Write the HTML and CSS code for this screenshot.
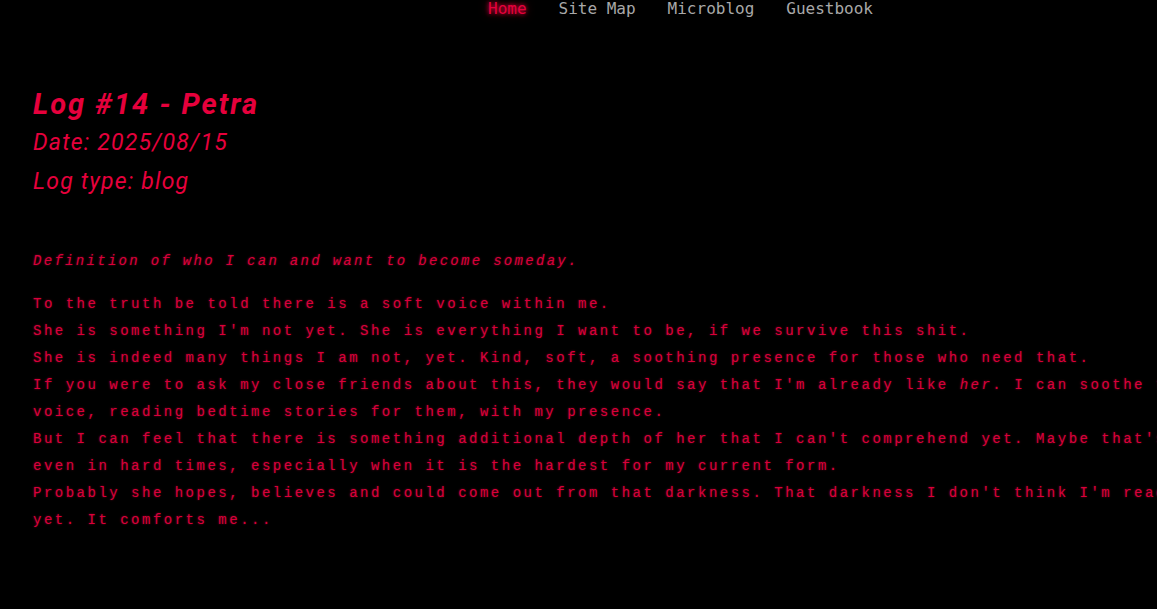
FILE: index.html
```html
<!DOCTYPE html>
<html lang="en">
<head>
<meta charset="utf-8">
<title>Log #14 - Petra</title>
<link rel="stylesheet" href="styles.css">
</head>
<body>
<nav class="nav">
  <a class="nav-link active" href="#">Home</a>
  <a class="nav-link" href="#">Site Map</a>
  <a class="nav-link" href="#">Microblog</a>
  <a class="nav-link" href="#">Guestbook</a>
</nav>
<main class="log">
  <header class="log-head">
    <h1 class="log-title">Log #14 - Petra</h1>
    <p class="log-meta">Date: 2025/08/15</p>
    <p class="log-meta">Log type: blog</p>
  </header>
  <p class="log-intro">Definition of who I can and want to become someday.</p>
  <p class="log-body">To the truth be told there is a soft voice within me.<br>She is something I'm not yet. She is everything I want to be, if we survive this shit.<br>She is indeed many things I am not, yet. Kind, soft, a soothing presence for those who need that.<br>If you were to ask my close friends about this, they would say that I'm already like <em>her</em>. I can soothe them with my<br>voice, reading bedtime stories for them, with my presence.<br>But I can feel that there is something additional depth of her that I can't comprehend yet. Maybe that's the hope<br>even in hard times, especially when it is the hardest for my current form.<br>Probably she hopes, believes and could come out from that darkness. That darkness I don't think I'm ready to face<br>yet. It comforts me...</p>
</main>
</body>
</html>
```
FILE: styles.css
```css
html, body {
  margin: 0;
  padding: 0;
  background: #000;
  overflow: hidden;
}
body {
  width: 1157px;
  height: 609px;
  color: #e6003c;
}
.nav {
  display: flex;
  gap: 32px;
  padding-left: 488px;
  height: 20px;
  align-items: flex-start;
}
.nav-link {
  font-family: "DejaVu Sans Mono", monospace;
  font-size: 16px;
  line-height: 17px;
  color: #a8a8a8;
  text-decoration: none;
}
.nav-link.active {
  color: #e6003c;
  text-shadow: 0 0 4px #e6003c, 0 0 8px rgba(230, 0, 60, 0.6);
}
.log {
  padding: 66px 0 0 33px;
}
.log-head {
  display: flex;
  flex-direction: column;
  gap: 2px;
}
.log-title {
  margin: 0;
  font-family: Roboto, "Liberation Sans", sans-serif;
  font-style: italic;
  font-weight: 700;
  font-size: 29px;
  line-height: 36px;
  letter-spacing: 2px;
  color: #e6003c;
}
.log-meta {
  margin: 0;
  font-family: Roboto, "Liberation Sans", sans-serif;
  font-style: italic;
  font-size: 23px;
  line-height: 37px;
  letter-spacing: 1.2px;
  color: #e6003c;
}
.log-intro {
  margin: 48px 0 0;
  font-family: "Liberation Mono", monospace;
  font-style: italic;
  font-size: 14px;
  line-height: 27px;
  letter-spacing: 2.3px;
  white-space: nowrap;
  color: #d8003a;
  text-shadow: 0 0 2px rgba(230, 0, 60, 0.6);
}
.log-body {
  margin: 16px 0 0;
  font-family: "Liberation Mono", monospace;
  font-size: 14px;
  line-height: 27px;
  letter-spacing: 2.5px;
  white-space: nowrap;
  color: #d8003a;
  text-shadow: 0 0 2px rgba(230, 0, 60, 0.6);
}
.log-body em {
  font-style: italic;
}
```
